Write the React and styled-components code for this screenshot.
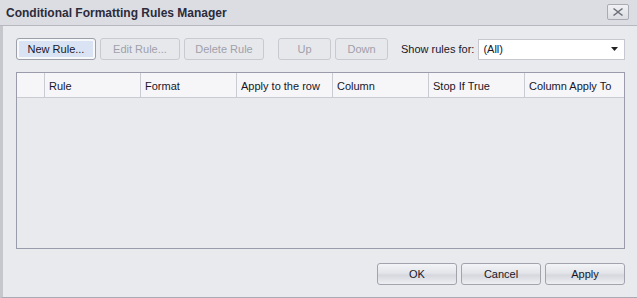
import React from 'react';
import styled, { createGlobalStyle } from 'styled-components';

const GlobalStyle = createGlobalStyle`
  html, body {
    margin: 0;
    padding: 0;
    background: #e9eaee;
  }
  body {
    font-family: "Liberation Sans", Arial, sans-serif;
  }
`;

const columns = ['Rule', 'Format', 'Apply to the row', 'Column', 'Stop If True', 'Column Apply To'];

const App = () => {
  return (
    <Window>
      <GlobalStyle />
      <TitleBar>
        <Title>Conditional Formatting Rules Manager</Title>
        <CloseButton>
          <svg width="10" height="8" viewBox="0 0 10 8">
            <path d="M1 0 L5 3 L9 0 L10 1 L6 4 L10 7 L9 8 L5 5 L1 8 L0 7 L4 4 L0 1 Z" fill="#6d6f7a" />
          </svg>
        </CloseButton>
      </TitleBar>
      <Body>
        <Toolbar>
          <Button focused width={80}>New Rule...</Button>
          <Button disabled width={80}>Edit Rule...</Button>
          <Button disabled width={80}>Delete Rule</Button>
          <Spacer width={6} />
          <Button disabled width={53}>Up</Button>
          <Button disabled width={53}>Down</Button>
          <Label>Show rules for:</Label>
          <Select>
            <span>(All)</span>
            <svg width="7" height="4" viewBox="0 0 7 4">
              <path d="M0 0 H7 L3.5 4 Z" fill="#222" />
            </svg>
          </Select>
        </Toolbar>
        <Grid>
          <HeaderRow>
            <Indicator />
            {columns.map((c, i) => (
              <HeaderCell key={c} last={i === columns.length - 1}>{c}</HeaderCell>
            ))}
          </HeaderRow>
        </Grid>
        <Footer>
          <DialogButton>OK</DialogButton>
          <DialogButton>Cancel</DialogButton>
          <DialogButton>Apply</DialogButton>
        </Footer>
      </Body>
    </Window>
  );
};

const Window = styled.div`
  width: 637px;
  height: 298px;
  display: flex;
  flex-direction: column;
  background: #e9eaee;
  font-size: 11px;
  color: #16172a;
  box-sizing: border-box;
`;

const TitleBar = styled.div`
  height: 25px;
  border-bottom: 1px solid #b6b7bf;
  background: #dcdde2;
  display: flex;
  align-items: center;
  justify-content: space-between;
  padding: 0 8px 0 6px;
  flex-shrink: 0;
`;

const Title = styled.div`
  font-weight: bold;
  font-size: 12px;
  color: #2b2b3c;
  padding-top: 1px;
`;

const CloseButton = styled.div`
  width: 20px;
  height: 14px;
  border: 1px solid #a9aab3;
  border-radius: 2px;
  background: linear-gradient(#f1f1f4, #dcdde2);
  display: flex;
  align-items: center;
  justify-content: center;
  margin-bottom: 2px;
`;

const Body = styled.div`
  flex: 1;
  display: flex;
  flex-direction: column;
  border-left: 3px solid #c6c7cd;
  border-bottom: 1px solid #a8a9b1;
  padding: 12px 12px 0 13px;
`;

const Toolbar = styled.div`
  display: flex;
  align-items: center;
  gap: 4px;
  height: 22px;
`;

const Spacer = styled.div`
  width: ${p => p.width}px;
`;

const Button = styled.div`
  box-sizing: border-box;
  width: ${p => p.width}px;
  height: 22px;
  display: flex;
  align-items: center;
  justify-content: center;
  border-radius: 3px;
  border: 1px solid ${p => (p.disabled ? '#c9cad1' : '#9d9fab')};
  color: ${p => (p.disabled ? '#9fa0ab' : '#16172a')};
  background: ${p => (p.disabled ? '#e7e8ec' : '#f7f8fa')};
  box-shadow: ${p => (p.focused ? 'inset 0 0 0 2px #f7f8fa, inset 0 0 0 10px #dae3f4' : 'none')};
`;

const Label = styled.div`
  margin-left: 9px;
  white-space: nowrap;
`;

const Select = styled.div`
  box-sizing: border-box;
  flex: 1;
  height: 21px;
  background: #fff;
  border: 1px solid #c6c7cf;
  display: flex;
  align-items: center;
  justify-content: space-between;
  padding: 0 6px 0 4px;
`;

const Grid = styled.div`
  margin-top: 12px;
  height: 177px;
  box-sizing: border-box;
  border: 1px solid #9a9bab;
  background: #e9eaee;
`;

const HeaderRow = styled.div`
  display: flex;
  height: 24px;
  background: #f6f6f8;
  border-bottom: 1px solid #c9cad2;
`;

const Indicator = styled.div`
  width: 27px;
  border-right: 1px solid #c9cad2;
`;

const HeaderCell = styled.div`
  box-sizing: border-box;
  flex: ${p => (p.last ? 1 : 'none')};
  width: ${p => (p.last ? 'auto' : '96px')};
  padding-left: 4px;
  padding-top: 1px;
  display: flex;
  align-items: center;
  border-right: ${p => (p.last ? 'none' : '1px solid #c9cad2')};
  white-space: nowrap;
`;

const Footer = styled.div`
  margin-top: 14px;
  display: flex;
  justify-content: flex-end;
  gap: 4px;
`;

const DialogButton = styled.div`
  box-sizing: border-box;
  width: 80px;
  height: 22px;
  display: flex;
  align-items: center;
  justify-content: center;
  border: 1px solid #a2a3ad;
  border-radius: 3px;
  background: linear-gradient(#f3f4f7 0%, #e3e5ea 45%, #d6d8de 55%, #eceef1 100%);
`;

export default App;
